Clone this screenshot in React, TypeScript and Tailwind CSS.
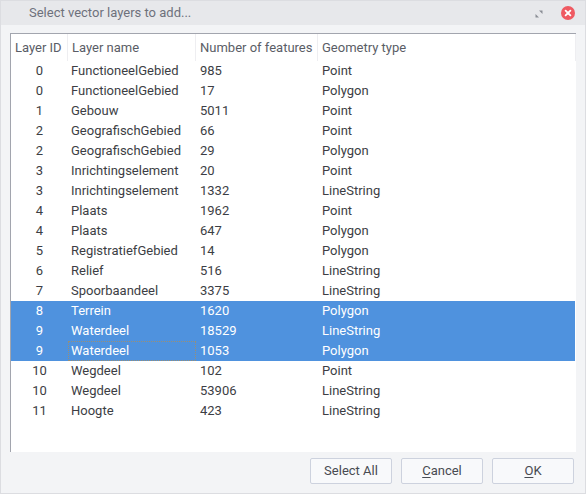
import React from "react";

type Row = { id: number; name: string; count: number; geom: string };

const rows: Row[] = [
  { id: 0, name: "FunctioneelGebied", count: 985, geom: "Point" },
  { id: 0, name: "FunctioneelGebied", count: 17, geom: "Polygon" },
  { id: 1, name: "Gebouw", count: 5011, geom: "Point" },
  { id: 2, name: "GeografischGebied", count: 66, geom: "Point" },
  { id: 2, name: "GeografischGebied", count: 29, geom: "Polygon" },
  { id: 3, name: "Inrichtingselement", count: 20, geom: "Point" },
  { id: 3, name: "Inrichtingselement", count: 1332, geom: "LineString" },
  { id: 4, name: "Plaats", count: 1962, geom: "Point" },
  { id: 4, name: "Plaats", count: 647, geom: "Polygon" },
  { id: 5, name: "RegistratiefGebied", count: 14, geom: "Polygon" },
  { id: 6, name: "Relief", count: 516, geom: "LineString" },
  { id: 7, name: "Spoorbaandeel", count: 3375, geom: "LineString" },
  { id: 8, name: "Terrein", count: 1620, geom: "Polygon" },
  { id: 9, name: "Waterdeel", count: 18529, geom: "LineString" },
  { id: 9, name: "Waterdeel", count: 1053, geom: "Polygon" },
  { id: 10, name: "Wegdeel", count: 102, geom: "Point" },
  { id: 10, name: "Wegdeel", count: 53906, geom: "LineString" },
  { id: 11, name: "Hoogte", count: 423, geom: "LineString" },
];

const selected = [12, 13, 14];
const focused = 14;

export default function App() {
  return (
    <div
      className="flex h-[494px] w-[586px] flex-col border border-[#dcdde1] bg-[#f3f4f6] text-[13px]"
      style={{ fontFamily: "Roboto, 'Liberation Sans', sans-serif" }}
    >
      {/* Title bar */}
      <div className="flex h-[24px] shrink-0 items-center bg-[#e7e8eb] pl-[28px] pr-[10px]">
        <span className="text-[13px] text-[#6e717c]">Select vector layers to add...</span>
        <div className="ml-auto flex items-center gap-[18px]">
          <svg width="8" height="8" viewBox="0 0 8 8" className="mt-[1px]">
            <path d="M4 0.5 H7.5 V4 Z" fill="#8a8d95" />
            <path d="M0.5 4 V7.5 H4 Z" fill="#8a8d95" />
          </svg>
          <svg width="14" height="14" viewBox="0 0 14 14">
            <circle cx="7" cy="7" r="7" fill="#ef5a62" />
            <path d="M4.6 4.6 L9.4 9.4 M9.4 4.6 L4.6 9.4" stroke="#fff" strokeWidth="1.8" strokeLinecap="round" />
          </svg>
        </div>
      </div>

      {/* Table */}
      <div className="mx-[9px] mt-[8px] flex h-[419px] flex-col border-l border-t border-[#a2a5ae] bg-white">
        <div className="flex h-[27px] shrink-0 items-center text-[#5a5d66]">
          <div className="flex h-full w-[57px] items-center border-r border-[#eeeef1] pl-[4px]">Layer ID</div>
          <div className="flex h-full w-[128px] items-center border-r border-[#eeeef1] pl-[4px]">Layer name</div>
          <div className="flex h-full w-[122px] items-center border-r border-[#eeeef1] pl-[4px]">Number of features</div>
          <div className="flex h-full flex-1 items-center border-r border-[#eeeef1] pl-[4px]">Geometry type</div>
        </div>
        <div className="flex flex-col pr-[1px]">
          {rows.map((r, i) => {
            const sel = selected.includes(i);
            return (
              <div
                key={i}
                className={
                  "flex h-[20px] items-center " +
                  (sel ? "bg-[#4f92de] text-white" : "text-[#3c3e44]")
                }
              >
                <div className="w-[57px] text-center">{r.id}</div>
                <div
                  className={
                    "flex h-full w-[128px] items-center " +
                    (i === focused ? "border border-dotted border-[#9a8f74] pl-[2px]" : "pl-[3px]")
                  }
                >
                  {r.name}
                </div>
                <div className="w-[122px] pl-[4px]">{r.count}</div>
                <div className="flex-1 pl-[4px]">{r.geom}</div>
              </div>
            );
          })}
        </div>
      </div>

      {/* Buttons */}
      <div className="mt-[6px] flex justify-end gap-[9px] pr-[11px]">
        <button className="h-[26px] w-[82px] rounded-[2px] border border-[#cdd2de] bg-[#f8f9fb] text-[13px] text-[#484b52]">
          Select All
        </button>
        <button className="h-[26px] w-[82px] rounded-[2px] border border-[#cdd2de] bg-[#f8f9fb] text-[13px] text-[#484b52]">
          <span className="underline underline-offset-2">C</span>ancel
        </button>
        <button className="h-[26px] w-[82px] rounded-[2px] border border-[#cdd2de] bg-[#f8f9fb] text-[13px] text-[#484b52]">
          <span className="underline underline-offset-2">O</span>K
        </button>
      </div>
    </div>
  );
}
